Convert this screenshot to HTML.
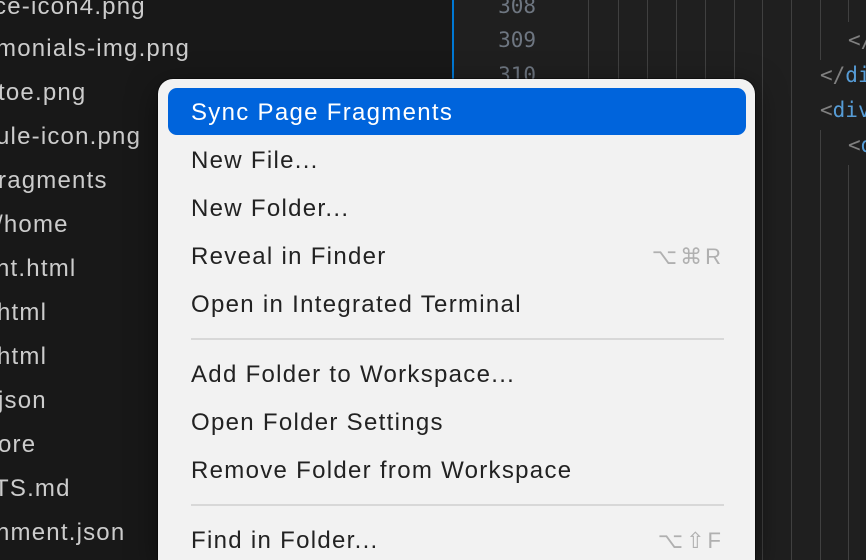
<!DOCTYPE html>
<html><head><meta charset="utf-8"><style>
*{margin:0;padding:0;box-sizing:border-box}
html,body{width:866px;height:560px;overflow:hidden}
body{background:#1f1f1f;position:relative;font-family:"Liberation Sans",sans-serif}
#side{position:absolute;left:0;top:0;width:452px;height:560px;background:#181818}
#side div{position:absolute;left:0;font-size:24px;letter-spacing:1.2px;color:#cccccc;white-space:nowrap;line-height:28px}
#bl{position:absolute;left:452px;top:0;width:2px;height:560px;background:#0078d4}
.ln{position:absolute;left:480px;width:56px;text-align:right;font-family:"DejaVu Sans Mono","Liberation Mono",monospace;font-size:21px;color:#6e7681;line-height:28px}
.g{position:absolute;top:0;width:1px;height:560px;background:#404040}
.code{position:absolute;font-family:"DejaVu Sans Mono","Liberation Mono",monospace;font-size:21px;line-height:28px;white-space:nowrap}
.t{color:#808080}.n{color:#569cd6}
#menu{position:absolute;left:158px;top:79px;width:597px;height:481px;background:#f2f2f2;border-radius:15px 15px 0 0;box-shadow:0 0 0 1px rgba(0,0,0,.35),0 8px 30px rgba(0,0,0,.5)}
.it{position:absolute;left:33px;font-size:24px;letter-spacing:1.3px;color:#222;line-height:28px;white-space:nowrap}
.sc{position:absolute;right:31px;font-size:22px;color:#b0b0b0;line-height:28px;letter-spacing:3px}
#hl{position:absolute;left:10px;top:9px;width:578px;height:47px;background:#0064dc;border-radius:9px}
.sep{position:absolute;left:33px;width:533px;height:2px;background:#d8d8d8}
</style></head><body>
<div id="side">
<div style="top:-7px;left:-6px">ce-icon4.png</div>
<div style="top:35px;left:-4px">monials-img.png</div>
<div style="top:79px;left:-2px">toe.png</div>
<div style="top:123px;left:-4px">ule-icon.png</div>
<div style="top:167px;left:-2px">ragments</div>
<div style="top:211px;left:-4px">/home</div>
<div style="top:255px;left:-4px">nt.html</div>
<div style="top:299px;left:-3px">html</div>
<div style="top:343px;left:-3px">html</div>
<div style="top:387px;left:-2px">json</div>
<div style="top:431px;left:-2px">ore</div>
<div style="top:475px;left:-6px">TS.md</div>
<div style="top:519px;left:-4px">nment.json</div>
</div>
<div id="bl"></div>
<div class="ln" style="top:-8px">308</div>
<div class="ln" style="top:26px">309</div>
<div class="ln" style="top:61px">310</div>
<div class="g" style="left:588px"></div><div class="g" style="left:618px"></div><div class="g" style="left:647px"></div><div class="g" style="left:676px"></div><div class="g" style="left:705px"></div><div class="g" style="left:734px"></div><div class="g" style="left:762px"></div><div class="g" style="left:791px"></div>
<div class="g" style="left:820px;height:60px"></div><div class="g" style="left:820px;top:130px;height:430px"></div>
<div class="g" style="left:848px;top:0;height:22px"></div><div class="g" style="left:848px;top:165px;height:400px"></div>
<div class="code t" style="left:848px;top:26px">&lt;/</div>
<div class="code" style="left:820px;top:61px"><span class="t">&lt;/</span><span class="n">di</span></div>
<div class="code" style="left:820px;top:96px"><span class="t">&lt;</span><span class="n">div</span></div>
<div class="code" style="left:848px;top:131px"><span class="t">&lt;</span><span class="n">d</span></div>
<div id="menu">
<div id="hl"></div>
<div class="it" style="top:20px;color:#fff">Sync Page Fragments</div>
<div class="it" style="top:68px">New File...</div>
<div class="it" style="top:116px">New Folder...</div>
<div class="it" style="top:164px">Reveal in Finder</div>
<div class="sc" style="top:164px">⌥⌘R</div>
<div class="it" style="top:212px">Open in Integrated Terminal</div>
<div class="sep" style="top:259px"></div>
<div class="it" style="top:282px">Add Folder to Workspace...</div>
<div class="it" style="top:330px">Open Folder Settings</div>
<div class="it" style="top:378px">Remove Folder from Workspace</div>
<div class="sep" style="top:425px"></div>
<div class="it" style="top:448px">Find in Folder...</div>
<div class="sc" style="top:448px">⌥⇧F</div>
</div>
</body></html>
